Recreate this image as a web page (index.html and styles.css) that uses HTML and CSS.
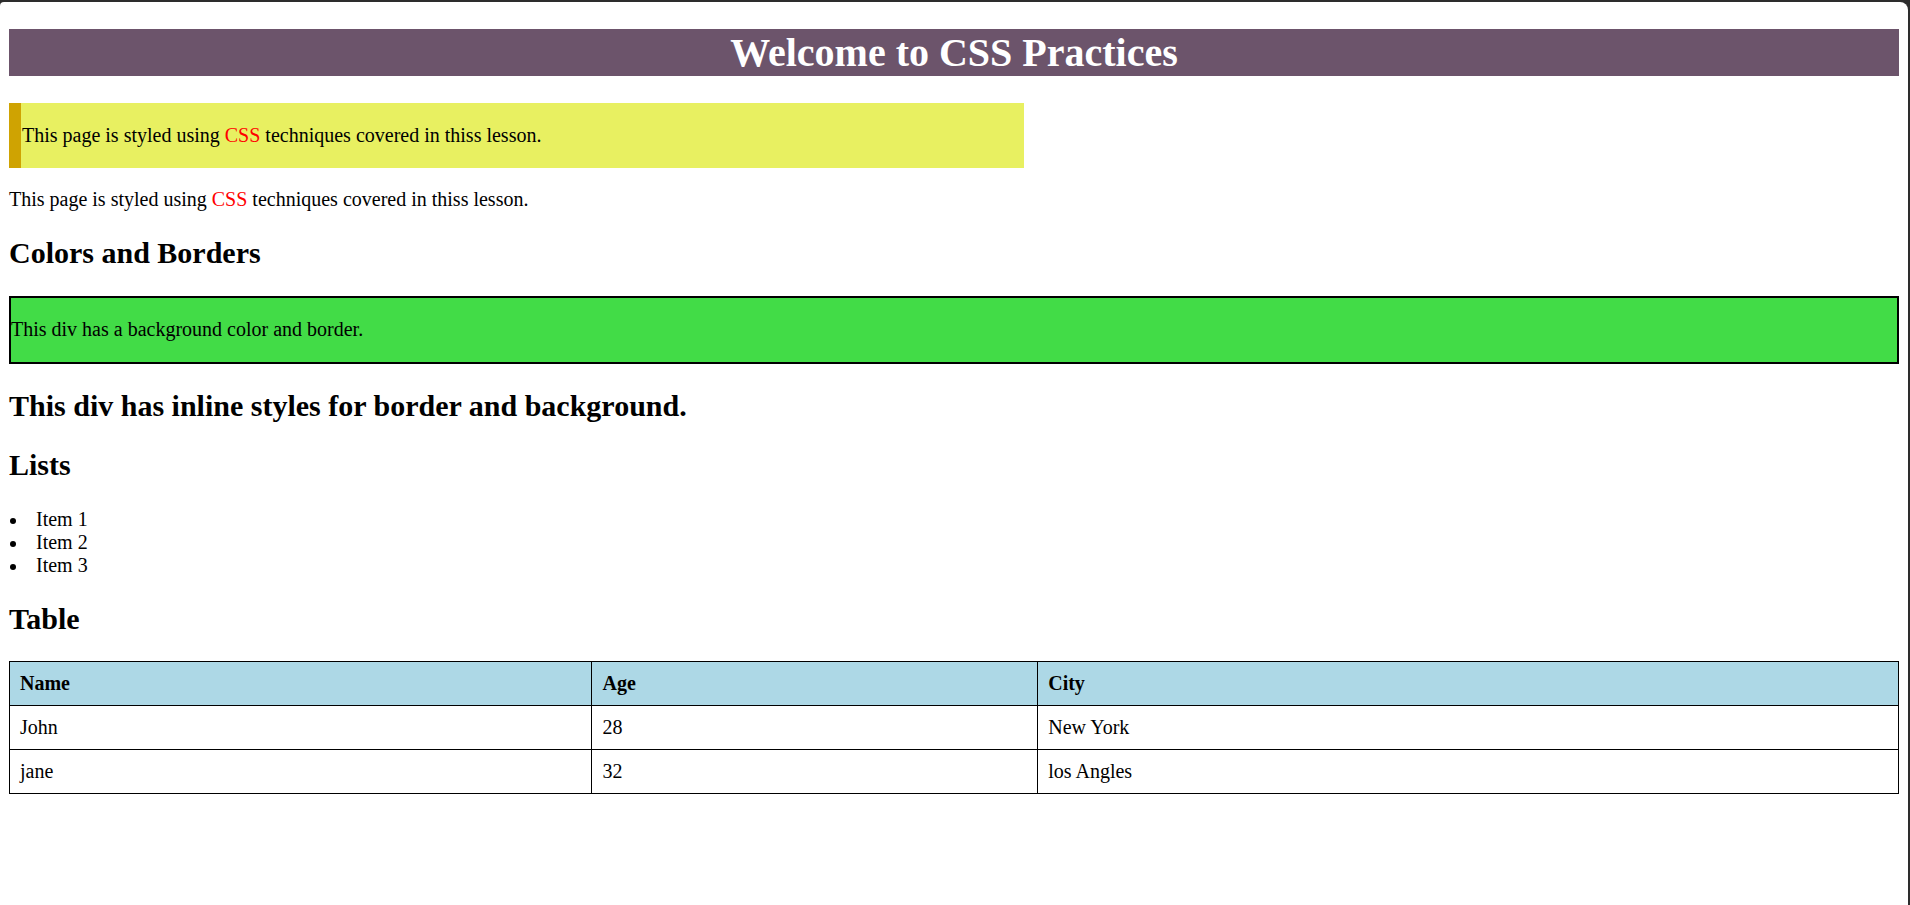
FILE: index.html
```html
<!DOCTYPE html>
<html lang="en">
<head>
<meta charset="utf-8">
<title>CSS Practices</title>
<link rel="stylesheet" href="styles.css">
</head>
<body>
<div class="window">
  <h1 class="title">Welcome to CSS Practices</h1>
  <div class="note">
    <p>This page is styled using <span class="accent">CSS</span> techniques covered in thiss lesson.</p>
  </div>
  <p>This page is styled using <span class="accent">CSS</span> techniques covered in thiss lesson.</p>

  <h2>Colors and Borders</h2>
  <div class="boxed">
    <p>This div has a background color and border.</p>
  </div>
  <h2>This div has inline styles for border and background.</h2>

  <h2>Lists</h2>
  <ul class="items">
    <li>Item 1</li>
    <li>Item 2</li>
    <li>Item 3</li>
  </ul>

  <h2>Table</h2>
  <table class="data">
    <thead>
      <tr><th>Name</th><th>Age</th><th>City</th></tr>
    </thead>
    <tbody>
      <tr><td>John</td><td>28</td><td>New York</td></tr>
      <tr><td>jane</td><td>32</td><td>los Angles</td></tr>
    </tbody>
  </table>
</div>
</body>
</html>
```
FILE: styles.css
```css
html {
  background: #2d2d2d;
}

body {
  margin: 0;
  padding: 2px 2px 0 0;
  font-family: "Liberation Serif", "Times New Roman", serif;
  font-size: 20px;
  line-height: 23px;
  color: #000;
}

.window {
  background: #fff;
  border-radius: 4px 8px 0 0;
  padding: 27px 9px 1px 9px;
  min-height: 875px;
}

.title {
  margin: 0 0 27px;
  background: #6c546b;
  color: #fff;
  text-align: center;
  font-size: 40px;
  line-height: 47px;
  font-weight: bold;
}

p {
  margin: 20px 0;
}

.note {
  width: 1001px;
  padding: 1px;
  border-left: 12px solid #cfa302;
  background: #e8f061;
}

.accent {
  color: #ff0000;
}

h2 {
  font-size: 30px;
  line-height: 34.5px;
  font-weight: bold;
  margin: 25px 0;
}

.boxed {
  background: #42dc47;
  border: 2px solid #000;
}

.boxed p {
  margin: 20px 0 21px;
}

.items {
  margin: 20px 0;
  padding-left: 0;
  list-style: none;
}

.items li {
  height: 23px;
}

.items li::before {
  content: "";
  display: inline-block;
  width: 6px;
  height: 6px;
  margin: 0 20px 0 1px;
  border-radius: 50%;
  background: #000;
  vertical-align: 2px;
}

.data {
  width: 100%;
  border-collapse: collapse;
}

.data th,
.data td {
  border: 1px solid #000;
  padding: 10px;
  text-align: left;
  font-size: 20px;
  line-height: 23px;
}

.data th {
  background: #add8e6;
  font-weight: bold;
}
```
